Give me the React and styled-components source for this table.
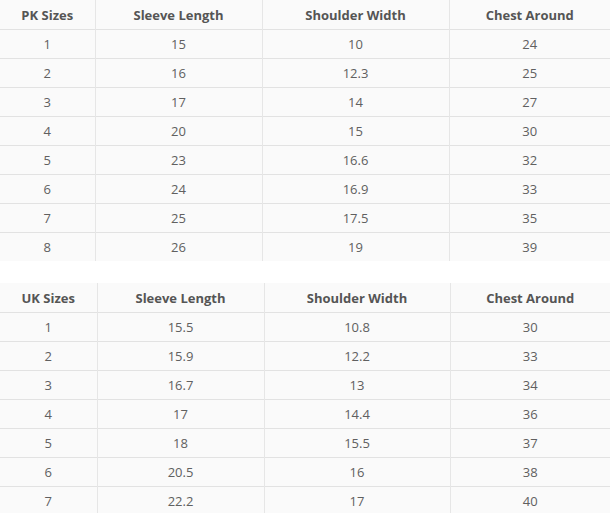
import React from "react"
import styled, { createGlobalStyle } from "styled-components"

const GlobalStyle = createGlobalStyle`
  body {
    margin: 0;
    background: #fff;
    font-family: "Open Sans", "Liberation Sans", sans-serif;
  }
`

const Page = styled.div`
  display: flex;
  flex-direction: column;
  gap: 22px;
  width: 610px;
`

const Table = styled.table`
  width: 100%;
  border-collapse: collapse;
  table-layout: fixed;
  background: #fafafa;
  color: #606060;
  font-size: 13px;
`

const HeadCell = styled.th`
  height: 29px;
  padding: 0;
  font-weight: 700;
  color: #555;
  text-align: center;
  & + & {
    border-left: 1px solid #e6e6e6;
  }
`

const Row = styled.tr`
  & > td {
    border-top: 1px solid #e2e2e2;
  }
`

const Cell = styled.td`
  height: 28px;
  padding: 0;
  text-align: center;
  & + & {
    border-left: 1px solid #e6e6e6;
  }
`

const pk = [
  [1, 15, 10, 24],
  [2, 16, 12.3, 25],
  [3, 17, 14, 27],
  [4, 20, 15, 30],
  [5, 23, 16.6, 32],
  [6, 24, 16.9, 33],
  [7, 25, 17.5, 35],
  [8, 26, 19, 39],
]

const uk = [
  [1, 15.5, 10.8, 30],
  [2, 15.9, 12.2, 33],
  [3, 16.7, 13, 34],
  [4, 17, 14.4, 36],
  [5, 18, 15.5, 37],
  [6, 20.5, 16, 38],
  [7, 22.2, 17, 40],
]

const SizeTable = ({ label, rows, widths }) => (
  <Table>
    <colgroup>
      {widths.map((w, i) => (
        <col key={i} style={{ width: w }} />
      ))}
    </colgroup>
    <thead>
      <tr>
        <HeadCell>{label}</HeadCell>
        <HeadCell>Sleeve Length</HeadCell>
        <HeadCell>Shoulder Width</HeadCell>
        <HeadCell>Chest Around</HeadCell>
      </tr>
    </thead>
    <tbody>
      {rows.map((r) => (
        <Row key={r[0]}>
          {r.map((v, i) => (
            <Cell key={i}>{v}</Cell>
          ))}
        </Row>
      ))}
    </tbody>
  </Table>
)

export default function App() {
  return (
    <>
      <GlobalStyle />
      <Page>
        <SizeTable label="PK Sizes" rows={pk} widths={[95, 167, 187, 161]} />
        <SizeTable label="UK Sizes" rows={uk} widths={[97, 167, 186, 160]} />
      </Page>
    </>
  )
}
